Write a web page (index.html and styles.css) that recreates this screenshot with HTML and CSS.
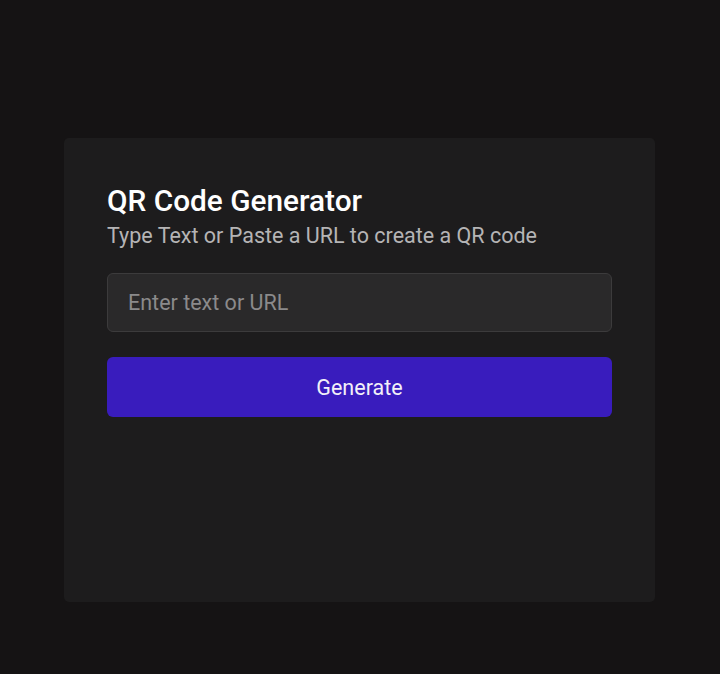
FILE: index.html
```html
<!DOCTYPE html>
<html>
<head>
<meta charset="utf-8">
<link rel="stylesheet" href="styles.css">
</head>
<body>
<main class="page">
  <section class="card">
    <h1 class="title">QR Code Generator</h1>
    <p class="subtitle">Type Text or Paste a URL to create a QR code</p>
    <input class="field" type="text" placeholder="Enter text or URL">
    <button class="btn" type="button">Generate</button>
  </section>
</main>
</body>
</html>
```
FILE: styles.css
```css
* { box-sizing: border-box; }
html, body {
  margin: 0;
  padding: 0;
  background: #151314;
  height: 100%;
}
body {
  font-family: Roboto, "Noto Sans", sans-serif;
}
.page {
  display: flex;
  justify-content: center;
  padding: 138px 1px 0 0;
}
.card {
  width: 591px;
  height: 464px;
  background: #1d1c1d;
  border-radius: 5px;
  padding: 45px 43px 0 43px;
  display: flex;
  flex-direction: column;
}
.title {
  margin: 0;
  font-size: 29.8px;
  font-weight: 500;
  color: #ffffff;
  line-height: 36px;
}
.subtitle {
  margin: 0;
  font-size: 21.5px;
  color: #b5b4b5;
  line-height: 34px;
}
.field {
  margin-top: 20px;
  height: 59px;
  width: 100%;
  background: #2a292a;
  border: 1px solid #3c3b3c;
  border-radius: 6px;
  padding: 0 20px;
  font-family: inherit;
  font-size: 21.5px;
  color: #e0e0e0;
  outline: none;
}
.field::placeholder { color: #8b8a8b; }
.btn {
  margin-top: 25px;
  height: 60px;
  width: 100%;
  background: #391cbd;
  border: none;
  border-radius: 6px;
  color: #f2f0f8;
  font-family: inherit;
  font-size: 21.5px;
  cursor: pointer;
}
```
